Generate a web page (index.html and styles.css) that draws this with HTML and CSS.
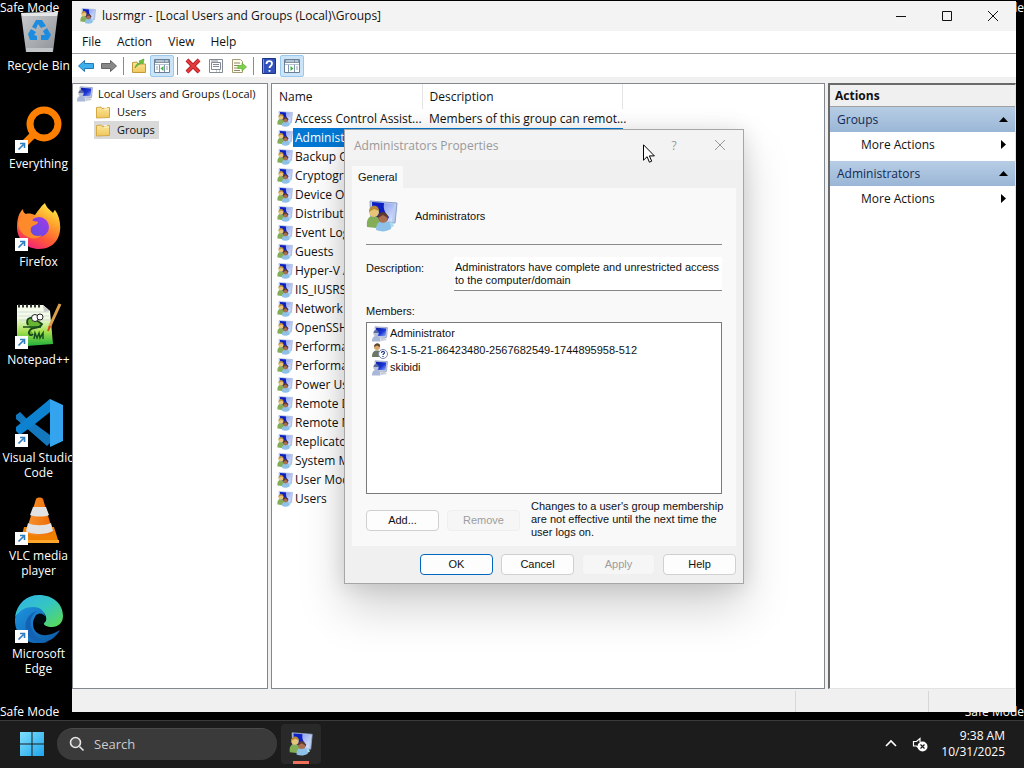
FILE: index.html
```html
<!DOCTYPE html>
<html lang="en">
<head>
    <meta charset="UTF-8">
    <meta name="viewport" content="width=device-width, initial-scale=1.0">
    <title>lusrmgr - [Local Users and Groups (Local)\Groups]</title>
    <link rel="stylesheet" href="styles.css">
</head>
<body>
    <!-- shared icons -->
    <svg class="sprite" aria-hidden="true">
        <defs>
            <linearGradient id="g-screen" x1="0" y1="0" x2="1" y2="1"><stop offset="0" stop-color="#6f86ea"/><stop offset="1" stop-color="#dde6fb"/></linearGradient>
            <linearGradient id="g-blue" x1="0" y1="0" x2="1" y2="1"><stop offset="0" stop-color="#0c1ea0"/><stop offset=".55" stop-color="#1a35d8"/><stop offset="1" stop-color="#9db4f5"/></linearGradient>
            <linearGradient id="g-folder" x1="0" y1="0" x2="0" y2="1"><stop offset="0" stop-color="#fbe59a"/><stop offset="1" stop-color="#efc75c"/></linearGradient>
            <linearGradient id="g-bin" x1="0" y1="0" x2="1" y2="1"><stop offset="0" stop-color="#c9cccf"/><stop offset="1" stop-color="#8e9296"/></linearGradient>
            <linearGradient id="g-fox" x1=".8" y1="0" x2=".3" y2="1"><stop offset="0" stop-color="#fff04a"/><stop offset=".35" stop-color="#ffa52c"/><stop offset=".7" stop-color="#ff5a36"/><stop offset="1" stop-color="#f0207c"/></linearGradient>
            <linearGradient id="g-purple" x1="0" y1="1" x2="1" y2="0"><stop offset="0" stop-color="#5b4de0"/><stop offset="1" stop-color="#a33ae8"/></linearGradient>
            <linearGradient id="g-note" x1="0" y1="0" x2="0" y2="1"><stop offset=".3" stop-color="#f4fbe9"/><stop offset=".65" stop-color="#a6e04e"/><stop offset="1" stop-color="#1faf3a"/></linearGradient>
            <linearGradient id="g-cone" x1="0" y1="0" x2="1" y2="0"><stop offset="0" stop-color="#f79433"/><stop offset="1" stop-color="#ee6a00"/></linearGradient>
            <linearGradient id="g-edge" x1="0" y1="0" x2="1" y2="1"><stop offset="0" stop-color="#2fb2ec"/><stop offset=".5" stop-color="#35c6c0"/><stop offset="1" stop-color="#5fdc4a"/></linearGradient>
            <linearGradient id="g-edge2" x1="0" y1="0" x2="1" y2="1"><stop offset="0" stop-color="#1e93e0"/><stop offset="1" stop-color="#0c59a4"/></linearGradient>
            <linearGradient id="g-win" x1="0" y1="0" x2="1" y2="1"><stop offset="0" stop-color="#7fe0fd"/><stop offset="1" stop-color="#1ea4ec"/></linearGradient>
        </defs>
        <symbol id="i-group" viewBox="0 0 32 32">
            <path d="M4 1l27 2-2 20-24-1z" fill="#b9cdf0" stroke="#8c9fcb"/>
            <path d="M6 2l22 2-2 17-19-1z" fill="url(#g-screen)"/>
            <path d="M6 2l12 1c-1 6 1 10 5 14l-2 4-14-1z" fill="#0d1fc0"/>
            <path d="M18 24l8-2 2 4-7 4z" fill="#a8dcee"/>
            <path d="M1 27c-1-8 2-11 7-11 4 0 6 3 6 8l-4 4z" fill="#83ae57"/>
            <circle cx="8" cy="12" r="5" fill="#e8c478"/>
            <path d="M3 12C3 4 13 4 13 11L8 9z" fill="#b88a33"/>
            <path d="M10 30c0-7 3-9 8-9s7 3 7 8c-5 3-10 3-15 1z" fill="#8fc0e8"/>
            <circle cx="17" cy="18" r="4.800" fill="#a96f50"/>
            <path d="M12 18c0-8 10-7 10 0l-5-3z" fill="#5d3a2a"/>
        </symbol>
        <symbol id="i-user" viewBox="0 0 16 16">
            <path d="M3 .8l12.500.8-1 10-11-.6z" fill="#c9cfe6" stroke="#97a0c4" stroke-width=".8"/>
            <path d="M4 1.800l10.300.7-.8 7.800-9-.6z" fill="url(#g-blue)"/>
            <path d="M8 11.500h4.500L15 14l-6 1z" fill="#c9ced8"/>
            <circle cx="4" cy="7.500" r="2.600" fill="#b9c1d6"/>
            <path d="M1.500 7c0-4 5-4 5 0z" fill="#5c6aa4"/>
            <path d="M0 15.500c0-4 1.500-5.500 4-5.500s4.500 1.500 4.500 5.500z" fill="#a9b8d8"/>
        </symbol>
        <symbol id="i-unknown" viewBox="0 0 16 16">
            <circle cx="5" cy="4" r="3" fill="#d9a76c"/>
            <path d="M2 4c0-5 7-5 6 0L5 2.500z" fill="#5d4630"/>
            <path d="M0 14c0-5 2-6.500 5-6.500S9 9 9 14z" fill="#6d7860"/>
            <circle cx="11" cy="11" r="4.500" fill="#fff" stroke="#7c86ab"/>
            <path d="M9.500 10c0-2.200 3-2 3-.3 0 1.100-1.500 1.100-1.500 2.300M11 13v1" fill="none" stroke="#26408c" stroke-width="1.200"/>
        </symbol>
        <symbol id="i-folder" viewBox="0 0 16 16">
            <path d="M1.500 3.500L6 3l1 1.500 7.500-1v10l-13 .5z" fill="url(#g-folder)" stroke="#d3a945"/>
            <path d="M9 5h5M9 3.500h3" stroke="#fff6cf"/>
        </symbol>
        <symbol id="i-shortcut" viewBox="0 0 13 13">
            <path d="M0 0h13v13H0z" fill="#fff"/>
            <path d="M3.500 9.500l5-5M5 3.500h4.500V8" fill="none" stroke="#2d7dc0" stroke-width="1.600"/>
        </symbol>
        <symbol id="i-panel" viewBox="0 0 16 16">
            <path d="M.5 1.500h15v13H.5z" fill="#fff" stroke="#6b8096"/>
            <path d="M1 2h14v3H1z" fill="#8296aa"/>
            <path d="M2 3h8M11 3h3" stroke="#e9f0f6"/>
            <path d="M1 6.500h14" stroke="#b4c2cf"/>
        </symbol>
    </svg>

    <main class="desktop">
        <span class="safe-mode top-left">Safe Mode</span>
        <span class="safe-mode top-right">Safe Mode</span>
        <span class="safe-mode bottom-left">Safe Mode</span>
        <span class="safe-mode bottom-right">Safe Mode</span>

        <nav class="shortcuts">
            <a href="#" class="shortcut">
                <svg viewBox="0 0 48 48"><path d="M6 6l37-1-5 40H11z" fill="url(#g-bin)"/><path d="M6 6l37-1-1 4H7z" fill="#e4e6e8"/><path d="M11 41h27l-.5 4H11.500z" fill="#c3c6c9"/><g fill="#1c8ce0"><path d="M17 20l4-7h6l4 6-5 2-3-4-2 5z"/><path d="M32 21l4 7-3 5h-7v-5h4l-2-4z"/><path d="M22 33h-7l-2-6 3-5 5 3-2 3 3 1z"/></g></svg>
                <span>Recycle Bin</span>
            </a>
            <a href="#" class="shortcut">
                <svg viewBox="0 0 48 48"><circle cx="29" cy="19" r="14" fill="none" stroke="#ff8000" stroke-width="7"/><path d="M19 29L7 41" stroke="#ff8000" stroke-width="7"/><use href="#i-shortcut" y="35" width="13" height="13"/></svg>
                <span>Everything</span>
            </a>
            <a href="#" class="shortcut">
                <svg viewBox="0 0 48 48"><path d="M2 24C2 15 4 10 8 6c0 3 1 4 3 5 3-1 6 0 9 1 3-4 6-9 10-12 1 4 5 7 8 10 1-2 1-2 2-3 9 12 8 39-16 39C12 46 2 37 2 24z" fill="url(#g-fox)"/><circle cx="24" cy="24" r="10" fill="url(#g-purple)"/><path d="M3 21c1-6 3-7 8-10 3 0 6 0 9 2l-3 4c2 2 5 1 6 2 0 3-6 3-7 6-2 6 5 10 11 7-7 8-23 1-24-11z" fill="#ff8a2c"/><use href="#i-shortcut" y="35" width="13" height="13"/></svg>
                <span>Firefox</span>
            </a>
            <a href="#" class="shortcut">
                <svg viewBox="0 0 48 48"><path d="M2 4h26l7 6 3 33-26 2-10-3z" fill="url(#g-note)"/><path d="M28 4l7 6-6 1z" fill="#c9c9c9"/><path d="M3 5h24" stroke="#333" stroke-width="3" stroke-dasharray="2 2"/><path d="M3 11h31M3 15h31M4 19h31" stroke="#c5ced4" stroke-width=".7"/><path d="M13 24c-4-8 6-9 8-5l6 4c-3 6-9 2-12 6s1 7 3 4" fill="#67b531" stroke="#1b421c" stroke-width="1.800"/><circle cx="20" cy="17" r="3.500" fill="#fff" stroke="#222"/><circle cx="25" cy="16" r="3" fill="#fff" stroke="#222"/><path d="M8 26h18M19 38l1-6 2 5 2-5 1 5 3-5v6" fill="none" stroke="#174f1e" stroke-width="1.500"/><path d="M45 3L34 27" stroke="#dca048" stroke-width="3"/><path d="M35 25l-2 5" stroke="#d5491f" stroke-width="2"/><use href="#i-shortcut" y="35" width="13" height="13"/></svg>
                <span>Notepad++</span>
            </a>
            <a href="#" class="shortcut">
                <svg viewBox="0 0 48 48"><path d="M35 0L13 21 5 13 1 16v4l31 27 6-6V8z" fill="#1478bf"/><path d="M36 13L5 36 1 32v-4L35 0z" fill="#0c82d0"/><path d="M35 0l13 6v36l-13 6z" fill="#33a4ed"/><path d="M35 13L20 25l15 11z" fill="#000"/><use href="#i-shortcut" y="35" width="13" height="13"/></svg>
                <span>Visual Studio Code</span>
            </a>
            <a href="#" class="shortcut">
                <svg viewBox="0 0 48 48"><path d="M9 30h30l5 16H5z" fill="#f08000"/><path d="M5 43h39v3H5z" fill="#ffa62d"/><path d="M21 2c1-2 6-2 7 0l10 33c-5 5-22 5-27 0z" fill="url(#g-cone)"/><path d="M18 10h13l3 8c-4 2-14 2-19 0z" fill="#e2e2e2"/><path d="M13 26c5 3 17 3 23 0l2 8c-6 4-22 4-27 0z" fill="#e2e2e2"/><use href="#i-shortcut" y="35" width="13" height="13"/></svg>
                <span>VLC media player</span>
            </a>
            <a href="#" class="shortcut">
                <svg viewBox="0 0 48 48"><path d="M0 22C2 8 12 0 24 0c14 0 24 9 24 21 0 7-5 11-11 11-5 0-9-2-8-4 3-2 3-6 0-10-5-5-18-6-29 4z" fill="url(#g-edge)"/><path d="M0 23c4-8 11-11 18-11 8 0 12 5 12 10-4-4-12-2-12 7 0 10 11 16 27 6C33 57-2 51 0 23z" fill="url(#g-edge2)"/><path d="M22 16c-12 8-6 27 10 31-9 2-17-2-20-8-4-10 0-20 10-23z" fill="#1462b4"/><circle cx="25" cy="24" r="5.500" fill="#020a10"/><use href="#i-shortcut" y="35" width="13" height="13"/></svg>
                <span>Microsoft Edge</span>
            </a>
        </nav>

        <section class="window">
            <header class="titlebar">
                <svg class="icon16"><use href="#i-group"/></svg>
                <h1>lusrmgr - [Local Users and Groups (Local)\Groups]</h1>
                <div class="caption-buttons">
                    <button type="button" aria-label="Minimize"><svg viewBox="0 0 12 12"><path d="M1 6.500h10"/></svg></button>
                    <button type="button" aria-label="Maximize"><svg viewBox="0 0 12 12"><path d="M1.500 1.500h9v9h-9z"/></svg></button>
                    <button type="button" aria-label="Close"><svg viewBox="0 0 12 12"><path d="M1 1l10 10M11 1L1 11"/></svg></button>
                </div>
            </header>

            <nav class="menubar">
                <button type="button">File</button>
                <button type="button">Action</button>
                <button type="button">View</button>
                <button type="button">Help</button>
            </nav>

            <div class="toolbar">
                <button type="button" aria-label="Back"><svg class="icon16" viewBox="0 0 16 16"><path d="M.5 8l6-5.500v3h9v5h-9v3z" fill="#3cb0ec" stroke="#2579b4"/></svg></button>
                <button type="button" aria-label="Forward"><svg class="icon16" viewBox="0 0 16 16"><path d="M15.500 8l-6-5.500v3h-9v5h9v3z" fill="#888" stroke="#666"/></svg></button>
                <i></i>
                <button type="button" aria-label="Up"><svg class="icon16" viewBox="0 0 16 16"><path d="M1.500 4.500L6 4l1 2h7.500v8.500h-13z" fill="url(#g-folder)" stroke="#c39a3a"/><path d="M4 10c1-4 3-5 5-5L8 3l5-2-1 5-1-1c-3 1-4 2-7 5z" fill="#6cc43c" stroke="#4a9a2a" stroke-width=".6"/></svg></button>
                <button type="button" class="on" aria-label="Show/Hide Console Tree"><svg class="icon16"><use href="#i-panel"/><path d="M5.500 7v7M10.500 7v7" stroke="#8196aa"/><path d="M2 9h2M2 11h2M12 9h2M12 11h2" stroke="#8ca0b3"/><path d="M9.500 8v5L6.500 10.500z" fill="#3fae49"/></svg></button>
                <i></i>
                <button type="button" aria-label="Delete"><svg class="icon16" viewBox="0 0 16 16"><path d="M2 2l12 12M14 2L2 14" stroke="#a9151a" stroke-width="4"/><path d="M2 2l12 12M14 2L2 14" stroke="#e33a3c" stroke-width="2.500"/></svg></button>
                <button type="button" aria-label="Properties"><svg class="icon16" viewBox="0 0 16 16"><path d="M1.500 1.500h13v13h-13z" fill="#fff" stroke="#858b94"/><path d="M3.500 4.500h9v7h-9zM5 6.500h6M5 8.500h6M8 13h1M11 13h1M3 3h7" fill="none" stroke="#858b94"/></svg></button>
                <button type="button" aria-label="Export List"><svg class="icon16" viewBox="0 0 16 16"><path d="M1.500 1.500h8l2 2v11h-10z" fill="#fffdf0" stroke="#a59a73"/><path d="M3 5h6M3 7.500h5M3 10h5M3 12.500h6" stroke="#92876a"/><path d="M7 7.500h4V5l4.500 4L11 13v-2.500H7z" fill="#7fd04c" stroke="#4fa62e" stroke-width=".6"/></svg></button>
                <i></i>
                <button type="button" aria-label="Help"><svg class="icon16" viewBox="0 0 16 16"><path d="M1.500.5h13v15h-13z" fill="#3152bd" stroke="#1d3280"/><path d="M2.500 1v14" stroke="#7d98e6"/><path d="M5.500 6c0-4 5.500-3.500 5.500-.5 0 2.500-2.500 2.500-2.500 4.500M8.500 12v1.800" fill="none" stroke="#fff" stroke-width="1.800"/></svg></button>
                <button type="button" class="on" aria-label="Show/Hide Action Pane"><svg class="icon16"><use href="#i-panel"/><path d="M4.500 7v7M10.500 7v7" stroke="#8196aa"/><path d="M12 9h2M12 11h2" stroke="#8ca0b3"/><path d="M6.500 8v5l3-2.500z" fill="#3fae49"/></svg></button>
            </div>

            <div class="panes">
                <ul class="tree">
                    <li><a href="#"><svg class="icon16"><use href="#i-user"/></svg><span>Local Users and Groups (Local)</span></a>
                        <ul>
                            <li><a href="#"><svg class="icon16"><use href="#i-folder"/></svg><span>Users</span></a></li>
                            <li><a href="#" class="current"><svg class="icon16"><use href="#i-folder"/></svg><span>Groups</span></a></li>
                        </ul>
                    </li>
                </ul>

                <div class="list">
                    <table>
                        <thead>
                            <tr><th class="name">Name</th><th class="desc">Description</th></tr>
                        </thead>
                        <tbody>
                            <tr><td><svg class="icon16"><use href="#i-group"/></svg><span>Access Control Assist...</span></td><td>Members of this group can remot...</td></tr>
                            <tr class="selected"><td><svg class="icon16"><use href="#i-group"/></svg><span>Administ</span></td><td></td></tr>
                            <tr><td><svg class="icon16"><use href="#i-group"/></svg><span>Backup O</span></td><td></td></tr>
                            <tr><td><svg class="icon16"><use href="#i-group"/></svg><span>Cryptogra</span></td><td></td></tr>
                            <tr><td><svg class="icon16"><use href="#i-group"/></svg><span>Device Ow</span></td><td></td></tr>
                            <tr><td><svg class="icon16"><use href="#i-group"/></svg><span>Distribute</span></td><td></td></tr>
                            <tr><td><svg class="icon16"><use href="#i-group"/></svg><span>Event Log</span></td><td></td></tr>
                            <tr><td><svg class="icon16"><use href="#i-group"/></svg><span>Guests</span></td><td></td></tr>
                            <tr><td><svg class="icon16"><use href="#i-group"/></svg><span>Hyper-V A</span></td><td></td></tr>
                            <tr><td><svg class="icon16"><use href="#i-group"/></svg><span>IIS_IUSRS</span></td><td></td></tr>
                            <tr><td><svg class="icon16"><use href="#i-group"/></svg><span>Network C</span></td><td></td></tr>
                            <tr><td><svg class="icon16"><use href="#i-group"/></svg><span>OpenSSH</span></td><td></td></tr>
                            <tr><td><svg class="icon16"><use href="#i-group"/></svg><span>Performa</span></td><td></td></tr>
                            <tr><td><svg class="icon16"><use href="#i-group"/></svg><span>Performa</span></td><td></td></tr>
                            <tr><td><svg class="icon16"><use href="#i-group"/></svg><span>Power Use</span></td><td></td></tr>
                            <tr><td><svg class="icon16"><use href="#i-group"/></svg><span>Remote D</span></td><td></td></tr>
                            <tr><td><svg class="icon16"><use href="#i-group"/></svg><span>Remote M</span></td><td></td></tr>
                            <tr><td><svg class="icon16"><use href="#i-group"/></svg><span>Replicator</span></td><td></td></tr>
                            <tr><td><svg class="icon16"><use href="#i-group"/></svg><span>System M</span></td><td></td></tr>
                            <tr><td><svg class="icon16"><use href="#i-group"/></svg><span>User Mod</span></td><td></td></tr>
                            <tr><td><svg class="icon16"><use href="#i-group"/></svg><span>Users</span></td><td></td></tr>
                        </tbody>
                    </table>
                </div>

                <aside class="actions">
                    <h2>Actions</h2>
                    <button type="button" class="section">Groups<svg viewBox="0 0 9 9"><path d="M0 7l4.500-5L9 7z"/></svg></button>
                    <button type="button" class="more">More Actions<svg viewBox="0 0 9 9"><path d="M2 0l5 4.500L2 9z"/></svg></button>
                    <button type="button" class="section">Administrators<svg viewBox="0 0 9 9"><path d="M0 7l4.500-5L9 7z"/></svg></button>
                    <button type="button" class="more">More Actions<svg viewBox="0 0 9 9"><path d="M2 0l5 4.500L2 9z"/></svg></button>
                </aside>
            </div>

            <footer class="statusbar"><span></span><span></span><span></span></footer>
        </section>

        <section class="dialog" role="dialog" aria-labelledby="dialog-title">
            <header>
                <h2 id="dialog-title">Administrators Properties</h2>
                <button type="button">?</button>
                <button type="button" aria-label="Close"><svg viewBox="0 0 12 12"><path d="M1 1l10 10M11 1L1 11"/></svg></button>
            </header>
            <button type="button" class="tab">General</button>
            <div class="tab-panel">
                <div class="group-name">
                    <svg><use href="#i-group"/></svg>
                    <span>Administrators</span>
                </div>
                <div class="description">
                    <label for="description">Description:</label>
                    <textarea id="description" rows="2">Administrators have complete and unrestricted access to the computer/domain</textarea>
                </div>
                <h3>Members:</h3>
                <ul class="members">
                    <li><svg class="icon16"><use href="#i-user"/></svg>Administrator</li>
                    <li><svg class="icon16"><use href="#i-unknown"/></svg>S-1-5-21-86423480-2567682549-1744895958-512</li>
                    <li><svg class="icon16"><use href="#i-user"/></svg>skibidi</li>
                </ul>
                <div class="edit-row">
                    <button type="button" class="btn">Add...</button>
                    <button type="button" class="btn" disabled>Remove</button>
                    <p>Changes to a user's group membership are not effective until the next time the user logs on.</p>
                </div>
            </div>
            <footer>
                <button type="button" class="btn default">OK</button>
                <button type="button" class="btn">Cancel</button>
                <button type="button" class="btn" disabled>Apply</button>
                <button type="button" class="btn">Help</button>
            </footer>
        </section>

        <svg class="cursor" viewBox="0 0 12 19"><path d="M.5 .8v15.400l3.600-3.500 2.300 5.500 2.300-1-2.300-5.300h5z" fill="#fff" stroke="#000"/></svg>
    </main>

    <footer class="taskbar">
        <button type="button" class="start" aria-label="Start"><svg viewBox="0 0 24 24"><path d="M0 0h11.500v11.500H0zM12.500 0H24v11.500H12.500zM0 12.500h11.500V24H0zM12.500 12.500H24V24H12.500z" fill="url(#g-win)"/></svg></button>
        <label class="search">
            <svg viewBox="0 0 16 16"><circle cx="6.500" cy="6.500" r="5" fill="#555"/><path d="M10.500 10.500l4 4"/></svg>
            <input type="text" placeholder="Search" aria-label="Search">
        </label>
        <button type="button" class="task" aria-label="lusrmgr"><svg viewBox="0 0 32 32"><use href="#i-group"/></svg></button>
        <div class="tray">
            <button type="button" aria-label="Show hidden icons"><svg viewBox="0 0 16 16"><path d="M3 10l5-5 5 5" fill="none" stroke="#fff" stroke-width="1.600"/></svg></button>
            <button type="button" aria-label="Volume"><svg viewBox="0 0 16 16"><path d="M7 12L4.500 10H1.500V5.500h3L8 2.500V6" fill="none" stroke="#fff" stroke-width="1.200"/><circle cx="10.500" cy="10.500" r="5" fill="#fff"/><path d="M8.500 8.500l4 4M12.500 8.500l-4 4" stroke="#1c1c1c" stroke-width="1.200"/></svg></button>
            <time datetime="2025-10-31T09:38">9:38 AM<br>10/31/2025</time>
        </div>
    </footer>
</body>
</html>
```
FILE: styles.css
```css
* {
    margin: 0;
    padding: 0;
    box-sizing: border-box;
}
body {
    display: flex;
    flex-direction: column;
    height: 100vh;
    overflow: hidden;
    background-color: #000;
    color: #111;
    font-family: "Open Sans", "Noto Sans", sans-serif;
    font-size: 12px;
    line-height: 16px;
}
h1, h2, h3 {
    font-size: inherit;
    font-weight: normal;
}
ul {
    list-style: none;
}
a {
    color: inherit;
    text-decoration: none;
}
button, input, textarea {
    font: inherit;
    color: inherit;
    background: none;
    border: none;
}
svg {
    flex: none;
}
.sprite {
    position: absolute;
    width: 0;
    height: 0;
}
.icon16 {
    width: 16px;
    height: 16px;
}

/* desktop */
.desktop {
    flex: 1;
    position: relative;
    min-height: 0;
}
.safe-mode {
    position: absolute;
    color: #fff;
}
.top-left {
    top: 0;
    left: 0;
    z-index: 1;
}
.top-right {
    top: 0;
    right: 0;
}
.bottom-left {
    bottom: 0;
    left: 0;
}
.bottom-right {
    right: 0;
    bottom: 0;
}
.shortcuts {
    width: 77px;
    padding-top: 7px;
}
.shortcut {
    display: flex;
    flex-direction: column;
    align-items: center;
    gap: 3px;
    height: 98px;
    color: #fff;
    text-align: center;
    line-height: 15px;
}
.shortcut svg {
    width: 48px;
    height: 48px;
}

/* main window */
.window {
    position: absolute;
    top: 1px;
    right: 8px;
    bottom: 8px;
    left: 72px;
    display: flex;
    flex-direction: column;
    background-color: #f0f0f0;
}
.titlebar {
    display: flex;
    align-items: center;
    gap: 6px;
    height: 30px;
    padding-left: 8px;
    background-color: #f3f3f3;
}
.titlebar h1 {
    flex: 1;
}
.caption-buttons {
    display: flex;
}
.caption-buttons button {
    width: 46px;
    height: 28px;
}
.caption-buttons svg, .dialog header svg {
    display: block;
    width: 12px;
    height: 12px;
    margin: 0 auto;
    stroke: #111;
    fill: none;
}
.menubar {
    display: flex;
    height: 23px;
    padding-left: 2px;
    background-color: #fff;
    border-bottom: 1px solid #a0a0a0;
}
.menubar button {
    padding: 0 8px;
}
.toolbar {
    display: flex;
    align-items: center;
    height: 23px;
    padding-left: 2px;
    background-color: #fff;
}
.toolbar button {
    display: flex;
    align-items: center;
    justify-content: center;
    width: 23px;
    height: 22px;
}
.toolbar .on {
    width: 24px;
    background-color: #cce4f7;
    border: 1px solid #99c9ef;
    border-radius: 2px;
}
.toolbar i {
    width: 1px;
    height: 18px;
    margin: 0 3px;
    background-color: #8c8c8c;
}
.panes {
    flex: 1;
    display: flex;
    gap: 3px;
    min-height: 0;
    padding-top: 6px;
}
.tree {
    width: 196px;
    padding-top: 1px;
    background-color: #fff;
    border: 1px solid #828790;
    font-size: 11px;
    white-space: nowrap;
}
.tree a {
    display: flex;
    align-items: center;
    height: 18px;
    padding-left: 4px;
}
.tree span {
    padding-left: 5px;
}
.tree ul a {
    padding-left: 22px;
}
.tree ul span {
    padding-left: 6px;
}
.tree .current {
    width: 86px;
    background: linear-gradient(#d9d9d9, #d9d9d9) right / 65px 100% no-repeat;
}
.list {
    flex: 1;
    background-color: #fff;
    border: 1px solid #828790;
}
.list table {
    width: 351px;
    table-layout: fixed;
    border-collapse: collapse;
}
.list th {
    height: 25px;
    padding-left: 7px;
    font-weight: normal;
    text-align: left;
    border-right: 1px solid #e5e5e5;
}
.list .name {
    width: 150px;
}
.list td {
    height: 19px;
    padding-left: 7px;
    white-space: nowrap;
}
.list td:first-child {
    display: flex;
    align-items: center;
    padding-left: 5px;
}
.list td span {
    flex: 1;
    padding-left: 2px;
    line-height: 19px;
}
.selected span, .selected td:last-child {
    background-color: #0078d4;
    color: #fff;
}
.actions {
    width: 188px;
    background-color: #fff;
    border: 1px solid #e3e3e3;
    border-top: 2px solid #696969;
    border-left: 2px solid #696969;
}
.actions h2 {
    height: 22px;
    padding-left: 5px;
    background-color: #f0f0f0;
    border-bottom: 1px solid #a0a0a0;
    font-weight: bold;
    line-height: 22px;
}
.actions button {
    display: flex;
    align-items: center;
    justify-content: space-between;
    width: 100%;
    height: 25px;
    padding: 0 7px;
}
.actions svg {
    width: 9px;
    height: 9px;
}
.actions .section {
    background: linear-gradient(#b7cde5, #9ab6d6);
    color: #122a52;
}
.actions .section svg {
    fill: #000;
}
.actions .more {
    margin-bottom: 4px;
    padding-left: 31px;
}
.statusbar {
    display: flex;
    height: 23px;
    padding-top: 2px;
}
.statusbar span {
    width: 133px;
    border-right: 1px solid #d7d7d7;
}
.statusbar span:first-child {
    flex: 1;
}
.statusbar span:last-child {
    width: 87px;
    border-right: none;
}

/* properties dialog */
.dialog {
    position: absolute;
    top: 129px;
    left: 344px;
    width: 400px;
    padding: 0 7px 8px;
    background-color: #f0f0f0;
    border: 1px solid #a6a6a6;
    box-shadow: 0 24px 44px rgba(0, 0, 0, 0.18), 0 2px 20px rgba(0, 0, 0, 0.12);
    font-family: "Liberation Sans", Arial, sans-serif;
    font-size: 11px;
    line-height: 13px;
}
.dialog header {
    display: flex;
    align-items: center;
    height: 30px;
    margin: 0 -7px 6px;
    padding-left: 9px;
    background-color: #f3f3f3;
    color: #999;
    font-family: "Open Sans", "Noto Sans", sans-serif;
    font-size: 12px;
}
.dialog header h2 {
    flex: 1;
}
.dialog header button {
    width: 46px;
}
.dialog header svg {
    stroke: #999;
}
.tab {
    display: block;
    height: 22px;
    padding: 0 6px;
    background-color: #f9f9f9;
}
.tab-panel {
    padding: 12px 14px 0;
    height: 358px;
    background-color: #f9f9f9;
}
.group-name {
    display: flex;
    align-items: center;
    gap: 17px;
    height: 45px;
    padding-bottom: 12px;
    border-bottom: 1px solid #8a8a8a;
}
.group-name svg {
    width: 32px;
    height: 32px;
}
.description {
    display: flex;
    justify-content: space-between;
    padding: 12px 0;
}
.description label {
    padding-top: 5px;
}
.description textarea {
    width: 268px;
    height: 34px;
    padding: 4px 1px;
    background-color: #fff;
    border-bottom: 1px solid #868686;
    resize: none;
    overflow: hidden;
}
.dialog h3 {
    padding: 2px 0 4px;
}
.members {
    height: 172px;
    padding: 2px 5px;
    background-color: #fff;
    border: 1px solid #7a7a7a;
}
.members li {
    display: flex;
    align-items: center;
    gap: 2px;
    height: 17px;
}
.edit-row {
    display: flex;
    gap: 8px;
    margin-right: -8px;
    padding-top: 6px;
}
.edit-row .btn {
    margin-top: 10px;
}
.edit-row p {
    flex: 1;
    padding-left: 3px;
}
.btn {
    width: 73px;
    height: 21px;
    background-color: #fdfdfd;
    border: 1px solid #d0d0d0;
    border-radius: 4px;
}
.btn:disabled {
    background-color: #f6f6f6;
    border-color: #efefef;
    color: #9d9d9d;
}
.btn.default {
    border-color: #0067c0;
}
.dialog > footer {
    display: flex;
    justify-content: flex-end;
    gap: 8px;
    padding-top: 8px;
}
.cursor {
    position: absolute;
    top: 144px;
    left: 643px;
    width: 12px;
    height: 19px;
}

/* taskbar */
.taskbar {
    display: flex;
    align-items: center;
    height: 48px;
    padding: 0 19px 2px 20px;
    background-color: #1c1c1c;
    border-top: 1px solid #3a3a3a;
    color: #fff;
}
.start svg {
    display: block;
    width: 24px;
    height: 24px;
}
.search {
    display: flex;
    align-items: center;
    gap: 9px;
    width: 220px;
    height: 32px;
    margin: 0 4px 0 13px;
    padding: 0 12px;
    background-color: #3a3a3a;
    border-top: 1px solid #4a4a4a;
    border-radius: 16px;
}
.search svg {
    width: 16px;
    height: 16px;
    stroke: #e8e8e8;
    stroke-width: 1.6;
}
.search input {
    min-width: 0;
    font-size: 13px;
}
.search input::placeholder {
    color: #ccc;
    opacity: 1;
}
.task {
    display: flex;
    align-items: center;
    justify-content: center;
    width: 40px;
    height: 40px;
    background: linear-gradient(#f0705c, #f0705c) center 37px / 16px 3px no-repeat #292929;
    border-radius: 4px;
}
.task svg {
    width: 24px;
    height: 24px;
}
.tray {
    display: flex;
    align-items: center;
    gap: 13px;
    margin-left: auto;
    text-align: right;
}
.tray svg {
    display: block;
    width: 16px;
    height: 16px;
}
```
